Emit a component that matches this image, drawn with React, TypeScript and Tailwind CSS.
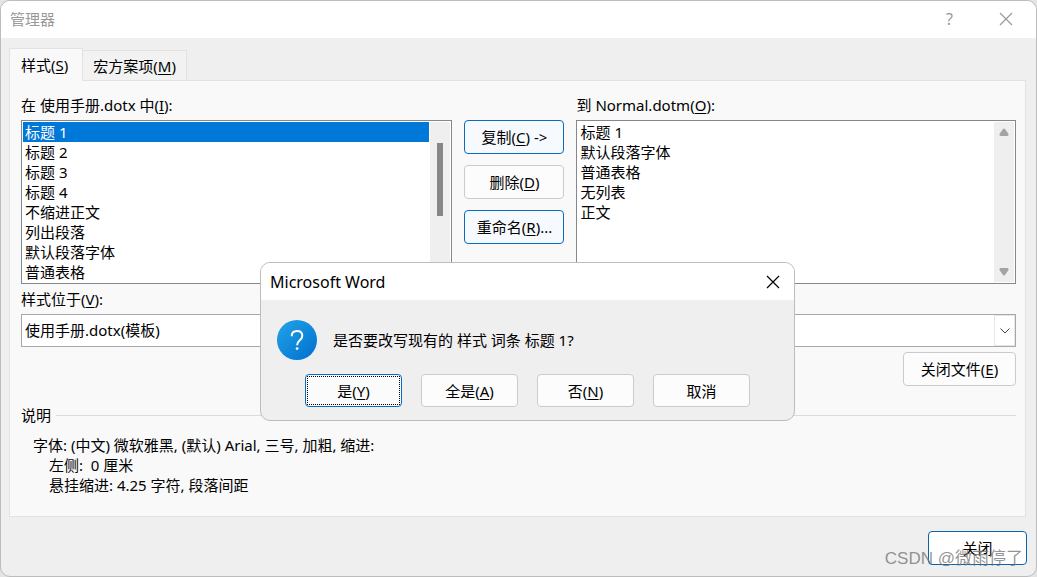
import { useState } from "react";
import type { ReactNode } from "react";
import clsx from "clsx";

const sourceStyles = [
  "标题 1",
  "标题 2",
  "标题 3",
  "标题 4",
  "不缩进正文",
  "列出段落",
  "默认段落字体",
  "普通表格",
];

const targetStyles = ["标题 1", "默认段落字体", "普通表格", "无列表", "正文"];

// Access key, e.g. (S)
const Key = ({ children }: { children: string }) => (
  <>
    (<span className="underline underline-offset-2">{children}</span>)
  </>
);

const CloseIcon = () => (
  <svg width="14" height="14" viewBox="0 0 14 14" fill="none" stroke="currentColor" strokeWidth="1.2">
    <path d="M1 1l12 12M13 1L1 13" />
  </svg>
);

type ButtonProps = {
  children: ReactNode;
  className?: string;
  tone?: "plain" | "active" | "default";
  onClick?: () => void;
};

const Button = ({ children, className, tone = "plain", onClick }: ButtonProps) => (
  <button
    type="button"
    onClick={onClick}
    className={clsx(
      "flex items-center justify-center rounded border leading-5 whitespace-pre",
      tone === "plain" && "border-[#cbcbcb] bg-[#fcfcfc]",
      tone === "active" && "border-[#0b6cbd] bg-[#f6fafe]",
      tone === "default" && "border-[#0a64ad] bg-white",
      className,
    )}
  >
    {children}
  </button>
);

type ListBoxProps = {
  labelId: string;
  items: string[];
  selected?: string;
  onSelect?: (item: string) => void;
  children: ReactNode;
};

const ListBox = ({ labelId, items, selected, onSelect, children }: ListBoxProps) => (
  <div className="flex h-[164px] border border-[#828790] bg-white p-px">
    <ul role="listbox" aria-labelledby={labelId} className="flex-1 overflow-hidden">
      {items.map((item) => (
        <li
          key={item}
          role="option"
          aria-selected={item === selected}
          onClick={() => onSelect?.(item)}
          className={clsx("h-5 px-0.5 leading-5", item === selected && "bg-[#0078d7] text-white")}
        >
          {item}
        </li>
      ))}
    </ul>
    {children}
  </div>
);

const ConfirmDialog = ({ onClose }: { onClose: () => void }) => (
  <div
    role="dialog"
    aria-labelledby="confirm-title"
    className="absolute top-[261px] left-[259px] w-[535px] overflow-hidden rounded-[10px] border border-[#bdbdbd] bg-[#efefef]"
  >
    <header className="flex h-[37px] items-center justify-between bg-white pr-[14px] pl-[9px]">
      <h2 id="confirm-title" className="text-base leading-5">
        Microsoft Word
      </h2>
      <button type="button" aria-label="关闭" onClick={onClose}>
        <CloseIcon />
      </button>
    </header>
    <div className="flex items-center gap-4 px-4 pt-5">
      <svg width="40" height="40" viewBox="0 0 40 40" fill="none">
        <defs>
          <linearGradient id="question" x1="0" y1="0" x2="1" y2="1">
            <stop offset="0" stopColor="#22a4e6" />
            <stop offset="1" stopColor="#006fd0" />
          </linearGradient>
        </defs>
        <circle cx="20" cy="20" r="20" fill="url(#question)" />
        <path
          d="M14.7 16.2c0-3.2 2.2-5.2 5.4-5.2s5.2 1.9 5.2 4.7c0 2.2-1.1 3.4-2.8 4.8-1.7 1.5-2.4 2.3-2.4 4.7"
          stroke="white"
          strokeWidth="2"
        />
        <circle cx="20.1" cy="28.6" r="1.4" fill="white" />
      </svg>
      <p>是否要改写现有的 样式 词条 标题 1?</p>
    </div>
    <div className="flex justify-center gap-[19px] pt-[14px] pb-[13px]">
      <Button tone="active" className="h-[33px] w-[97px] p-px" onClick={onClose}>
        <span className="flex h-full w-full items-center justify-center border border-dotted border-black bg-[#fbfbfb]">
          是<Key>Y</Key>
        </span>
      </Button>
      <Button className="h-[33px] w-[97px]" onClick={onClose}>
        全是<Key>A</Key>
      </Button>
      <Button className="h-[33px] w-[97px]" onClick={onClose}>
        否<Key>N</Key>
      </Button>
      <Button className="h-[33px] w-[97px]" onClick={onClose}>
        取消
      </Button>
    </div>
  </div>
);

const App = () => {
  const [selected, setSelected] = useState("标题 1");
  const [confirmOpen, setConfirmOpen] = useState(true);

  return (
    <div className="min-h-screen bg-[#e4e4e4] font-['Noto_Sans','Noto_Sans_CJK_SC',sans-serif] text-[15px] leading-5 text-black">
      <div className="relative flex min-h-screen flex-col overflow-hidden rounded-[10px] border border-[#bcbcbc] bg-[#efefef]">
        <header className="flex h-[37px] items-center bg-white pr-[23px] pb-0.5 pl-[9px] text-[#999]">
          <h1 className="flex-1">管理器</h1>
          <button type="button" aria-label="帮助" className="mr-[46px] text-base leading-5">
            ?
          </button>
          <button type="button" aria-label="关闭">
            <CloseIcon />
          </button>
        </header>

        <main className="pt-[10px] pr-[10px] pl-2">
          <div role="tablist" className="relative z-10 -mb-px flex items-end">
            <button
              type="button"
              role="tab"
              aria-selected="true"
              className="h-[33px] border border-b-0 border-[#e2e2e2] bg-[#f9f9f9] pr-[14px] pl-[11px]"
            >
              样式<Key>S</Key>
            </button>
            <button
              type="button"
              role="tab"
              aria-selected="false"
              className="h-[31px] border border-l-0 border-[#e2e2e2] bg-[#f2f2f2] px-[10px]"
            >
              宏方案项<Key>M</Key>
            </button>
          </div>

          <section className="border border-[#e2e2e2] bg-[#f9f9f9] pt-[14px] pr-[9px] pb-[21px] pl-[11px]">
            <div className="grid grid-cols-[431fr_100px_439fr] gap-x-3">
              <div>
                <p id="source-label" className="mb-[5px]">
                  在 使用手册.dotx 中<Key>I</Key>:
                </p>
                <ListBox
                  labelId="source-label"
                  items={sourceStyles}
                  selected={selected}
                  onSelect={setSelected}
                >
                  <div className="ml-px w-5 bg-[#efefef] pt-[21px]">
                    <div className="mx-auto h-[73px] w-1.5 bg-[#868686]" />
                  </div>
                </ListBox>
              </div>
              <div className="flex flex-col gap-[11px] pt-[25px]">
                <Button tone="active" className="h-[34px]" onClick={() => setConfirmOpen(true)}>
                  复制<Key>C</Key>
                  {" ->"}
                </Button>
                <Button className="h-[34px]">
                  删除<Key>D</Key>
                </Button>
                <Button tone="active" className="h-[34px]">
                  重命名<Key>R</Key>...
                </Button>
              </div>
              <div>
                <p id="target-label" className="mb-[5px]">
                  到 Normal.dotm<Key>O</Key>:
                </p>
                <ListBox labelId="target-label" items={targetStyles}>
                  <div className="flex w-5 flex-col items-center justify-between bg-[#efefef] py-1.5">
                    <svg width="10" height="8" viewBox="0 0 10 8" fill="#a3a3a3">
                      <path d="M4 1q1-1 2 0l3.5 5q.5 1.5-1 2h-7q-1.5-.5-1-2z" />
                    </svg>
                    <svg width="10" height="8" viewBox="0 0 10 8" fill="#a3a3a3">
                      <path d="M4 7q1 1 2 0l3.5-5q.5-1.5-1-2h-7q-1.5.5-1 2z" />
                    </svg>
                  </div>
                </ListBox>
              </div>
            </div>

            <label htmlFor="location" className="my-[5px] block">
              样式位于<Key>V</Key>:
            </label>
            <div className="relative">
              <select
                id="location"
                className="block h-[33px] w-full appearance-none border border-[#a6a8ae] bg-white px-[3px] pb-px"
              >
                <option>使用手册.dotx(模板)</option>
              </select>
              <span className="pointer-events-none absolute inset-y-px right-px flex w-[21px] items-center justify-center border border-[#e6e6e6] bg-white">
                <svg width="10" height="6" viewBox="0 0 10 6" fill="none" stroke="#444">
                  <path d="M.5.5L5 5 9.5.5" />
                </svg>
              </span>
            </div>
            <Button className="mt-[5px] ml-auto h-[34px] w-[113px]">
              关闭文件<Key>E</Key>
            </Button>

            <div className="mt-[19px] flex items-center gap-[5px]">
              <h2>说明</h2>
              <hr className="flex-1 border-[#dcdcdc]" />
            </div>
            <div className="mt-[10px] pl-3">
              <p>字体: (中文) 微软雅黑, (默认) Arial, 三号, 加粗, 缩进:</p>
              <p className="pl-4 whitespace-pre">左侧:  0 厘米</p>
              <p className="pl-4">悬挂缩进: 4.25 字符, 段落间距</p>
            </div>
          </section>
        </main>

        <footer className="px-[9px] pt-[14px] pb-[11px]">
          <Button tone="default" className="ml-auto h-[34px] w-[99px]">
            关闭
          </Button>
        </footer>

        {confirmOpen && <ConfirmDialog onClose={() => setConfirmOpen(false)} />}

        <span className="pointer-events-none absolute right-[13px] bottom-[7px] font-['Liberation_Sans','Noto_Sans_CJK_SC',sans-serif] text-[17px] text-[#777]/80">
          CSDN @微雨停了
        </span>
      </div>
    </div>
  );
};

export default App;
